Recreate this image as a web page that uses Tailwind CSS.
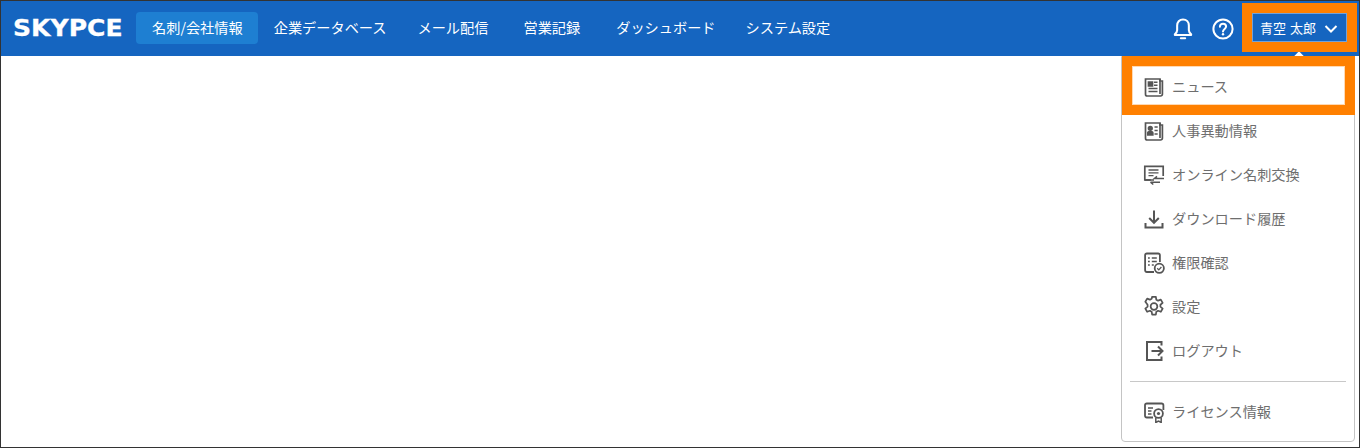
<!DOCTYPE html>
<html lang="ja">
<head>
<meta charset="UTF-8" />
<title>SKYPCE</title>
<script src="https://cdn.jsdelivr.net/npm/@tailwindcss/browser@4"></script>
</head>
<body class="bg-white font-['Noto_Sans_CJK_JP','Noto_Sans',sans-serif]">
<div class="relative h-[448px] w-[1360px] overflow-hidden border border-[#333]">
  <!-- Header -->
  <header class="flex h-[55px] items-center bg-[#1565c0] text-white">
    <span class="ml-[12px] mb-[1px] w-[123px] origin-left scale-x-[1.09] font-['DejaVu_Sans',sans-serif] text-[23px] font-bold leading-none [-webkit-text-stroke:0.3px_white]">SKYPCE</span>
    <nav class="mb-[1px] flex items-center text-[14.2px]">
      <a class="flex h-[32px] items-center rounded bg-[#1e7fd2] pl-4 pr-[15px]">名刺/会社情報</a>
      <a class="flex h-[32px] items-center pl-4 pr-[15px]">企業データベース</a>
      <a class="flex h-[32px] items-center px-4">メール配信</a>
      <a class="ml-[3px] flex h-[32px] items-center px-4">営業記録</a>
      <a class="ml-1 flex h-[32px] items-center pl-4 pr-[14px]">ダッシュボード</a>
      <a class="flex h-[32px] items-center px-4">システム設定</a>
    </nav>
    <div class="ml-auto flex items-center">
      <svg class="h-[26px] w-[26px]" viewBox="0 0 24 24" fill="none" stroke="#fff" stroke-width="1.900" stroke-linejoin="round"><path d="M12 3.200c-3.300 0-5.400 2.500-5.400 5.600v4.400c0 1.500-.9 2.600-2.100 3.600v.7h15v-.7c-1.200-1-2.100-2.100-2.100-3.600V8.800c0-3.100-2.100-5.600-5.400-5.600z"/><path d="M10 20.600h4" stroke-linecap="round"/></svg>
      <svg class="ml-[15px] h-[24px] w-[24px]" viewBox="0 0 24 24" fill="none" stroke="#fff" stroke-width="2"><circle cx="12" cy="12" r="9.600"/><path d="M8.900 9.700c0-1.900 1.400-3 3.100-3s3.100 1.100 3.100 2.800c0 2.400-3.100 2.500-3.100 5.100" stroke-linecap="round"/><circle cx="12" cy="17.300" r="1.200" fill="#fff" stroke="none"/></svg>
      <div class="ml-[16px] mr-[11px] flex h-[31px] w-[97px] items-center pl-[9px] text-[13px]">
        <span class="pb-[1px] [word-spacing:1px]">青空 太郎</span>
        <svg class="ml-[7px] h-[16px] w-[16px]" viewBox="0 0 16 16" fill="none" stroke="#fff" stroke-width="2"><path d="M2.500 5l5.500 5.500L13.500 5"/></svg>
      </div>
    </div>
  </header>

  <!-- User menu -->
  <div class="absolute top-[55px] left-[1120px] h-[386px] w-[234px] rounded-b border border-[#c4c4c4] bg-white text-[14.2px] text-[#6e6e6e]">
    <span class="absolute -top-[4px] left-[173px] h-[8px] w-[8px] rotate-45 bg-white"></span>
    <ul class="pt-[8px]">
      <li class="flex h-[44px] items-center gap-[7px] pl-[21px]">
        <svg class="h-[22px] w-[22px]" viewBox="0 0 22 22" fill="none" stroke="#555" stroke-width="1.700"><path d="M17 5h2.400v13.200a1.800 1.800 0 0 1-1.800 1.800H4.300A1.800 1.800 0 0 1 2.500 18.200V3h14.500z"/><path d="M17 3v15"/><path d="M5.500 6h4v4h-4z" fill="#555"/><path d="M11 6.300h3.500M11 9.300h3.500M5.500 12.500h9M5.500 15.500h9" stroke-width="1.400"/></svg>
        <span>ニュース</span>
      </li>
      <li class="flex h-[44px] items-center gap-[7px] pl-[21px]">
        <svg class="h-[22px] w-[22px]" viewBox="0 0 22 22" fill="none" stroke="#555" stroke-width="1.700"><path d="M17 5h2.400v13.200a1.800 1.800 0 0 1-1.800 1.800H4.300A1.800 1.800 0 0 1 2.500 18.200V3h14.500z"/><path d="M17 3v15"/><circle cx="7.300" cy="8.300" r="1.800" fill="#555"/><path d="M4.800 15v-2c0-1 1-1.500 2.500-1.500s2.500.5 2.500 1.500v2z" fill="#555"/><path d="M11.500 7h3.200M11.500 10.500h3.200M11.500 14h3.200" stroke-width="1.500"/></svg>
        <span>人事異動情報</span>
      </li>
      <li class="flex h-[44px] items-center gap-[7px] pl-[21px]">
        <svg class="h-[22px] w-[22px]" viewBox="0 0 22 22" fill="none" stroke="#555" stroke-width="1.700"><path d="M11 16H1.800V2.300h18.400v9.700"/><path d="M1.800 16h6"/><path d="M5.500 6h10M5.500 8.800h10M5.500 11.600h5" stroke-width="1.300"/><path d="M21 14.500H11.500l2.500-2.200M7.500 18.200H17M7.500 18.200l2.800 2.300" stroke-width="1.600"/></svg>
        <span>オンライン名刺交換</span>
      </li>
      <li class="flex h-[44px] items-center gap-[7px] pl-[21px]">
        <svg class="h-[22px] w-[22px]" viewBox="0 0 22 22" fill="none" stroke="#555" stroke-width="2"><path d="M11 2.500v12M6.200 10l4.800 4.800 4.800-4.800"/><path d="M2.500 15v4.500h17V15"/></svg>
        <span>ダウンロード履歴</span>
      </li>
      <li class="flex h-[44px] items-center gap-[7px] pl-[21px]">
        <svg class="h-[22px] w-[22px]" viewBox="0 0 22 22" fill="none" stroke="#555" stroke-width="1.800"><path d="M11 20H3.800a1.700 1.700 0 0 1-1.700-1.700V3.200a1.700 1.700 0 0 1 1.700-1.700h11.400a1.700 1.700 0 0 1 1.700 1.700V10"/><path d="M5 6h1.800M5 9.500h1.800M5 13h1.800M8.800 6h5M8.800 9.500h5M8.800 13h2" stroke-width="1.500"/><circle cx="16.300" cy="16.300" r="4.600" fill="#fff"/><path d="M14.200 16.300l1.600 1.600 2.600-2.900" stroke-width="1.300"/></svg>
        <span>権限確認</span>
      </li>
      <li class="flex h-[44px] items-center gap-[7px] pl-[21px]">
        <svg class="h-[22px] w-[22px]" viewBox="1.200 .8 21.600 21.600" fill="none" stroke="#555" stroke-width="1.700" stroke-linejoin="round"><path d="M10.200 2h3.600l.5 2.900 1.700.9 2.700-1 1.800 3.100-2.200 1.900v1.900l2.200 1.900-1.800 3.100-2.700-1-1.700.9-.5 2.900h-3.600l-.5-2.900-1.700-.9-2.700 1-1.800-3.100 2.200-1.900v-1.900L3.500 6.900l1.800-3.100 2.700 1 1.700-.9z" transform="translate(0 -.4)"/><circle cx="12" cy="11.200" r="3.300"/></svg>
        <span>設定</span>
      </li>
      <li class="flex h-[44px] items-center gap-[7px] pl-[21px]">
        <svg class="h-[22px] w-[22px]" viewBox="0 0 22 22" fill="none" stroke="#555" stroke-width="2"><path d="M18.500 5.500V2H4v18h14.500v-3.500"/><path d="M8.500 11h11M15 6.500l4.500 4.500-4.500 4.500"/></svg>
        <span>ログアウト</span>
      </li>
    </ul>
    <div class="mx-[8px] mt-[8px] border-t border-[#c8c8c8]"></div>
    <div class="mt-[8px] flex h-[44px] items-center gap-[7px] pl-[21px]">
      <svg class="h-[22px] w-[22px]" viewBox="0 0 22 22" fill="none" stroke="#555" stroke-width="1.800"><path d="M10 16.500H3.700A1.700 1.700 0 0 1 2 14.800V4.200A1.700 1.700 0 0 1 3.700 2.500h15A1.700 1.700 0 0 1 20.400 4.200V9"/><path d="M5 7h5M5 10h3.500M5 13h3.500" stroke-width="1.500"/><circle cx="15.500" cy="12.500" r="4.400" fill="#fff"/><circle cx="15.500" cy="12.500" r="1.600" fill="#555" stroke="none"/><path d="M12.800 16.500V21.500l2.700-1.500 2.700 1.500v-5" stroke-width="1.500"/></svg>
      <span>ライセンス情報</span>
    </div>
  </div>

  <!-- Annotation frames -->
  <div class="absolute top-[2px] left-[1241px] h-[49px] w-[115px] border-[10px] border-[#ff8000] outline outline-1 -outline-offset-[11px] outline-white/40"></div>
  <div class="absolute top-[55px] left-[1121px] h-[59px] w-[233px] border-[10px] border-[#ff8000] outline outline-1 -outline-offset-[11px] outline-[#ffd9b3]"></div>
</div>
</body>
</html>
